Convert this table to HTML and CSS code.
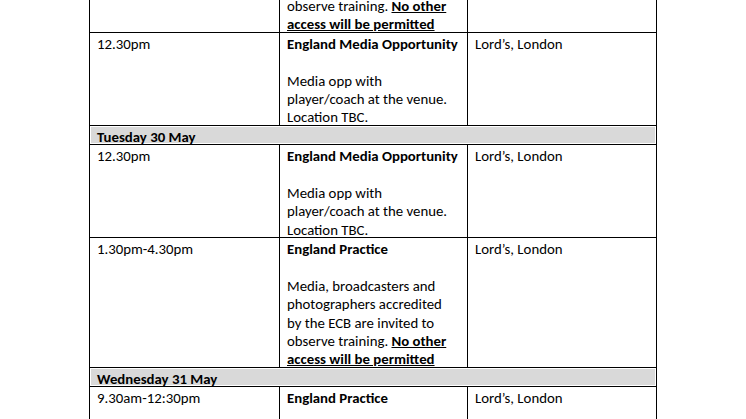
FILE: index.html
```html
<!DOCTYPE html>
<html lang="en">
<head>
<meta charset="utf-8">
<title>Media schedule</title>
<link rel="stylesheet" href="styles.css">
</head>
<body>
<div class="page">
<table class="schedule">
  <colgroup>
    <col class="c-time">
    <col class="c-event">
    <col class="c-venue">
  </colgroup>
  <tr class="partial">
    <td></td>
    <td><div class="ln">observe training. <span class="hl">No other</span></div><div class="ln"><span class="hl">access will be permitted</span></div></td>
    <td></td>
  </tr>
  <tr>
    <td><div class="ln">12.30pm</div></td>
    <td><div class="ln"><b>England Media Opportunity</b></div><div class="ln">&nbsp;</div><div class="ln">Media opp with</div><div class="ln">player/coach at the venue.</div><div class="ln">Location TBC.</div></td>
    <td><div class="ln">Lord’s, London</div></td>
  </tr>
  <tr class="day">
    <td colspan="3"><div class="ln">Tuesday 30 May</div></td>
  </tr>
  <tr>
    <td><div class="ln">12.30pm</div></td>
    <td><div class="ln"><b>England Media Opportunity</b></div><div class="ln">&nbsp;</div><div class="ln">Media opp with</div><div class="ln">player/coach at the venue.</div><div class="ln">Location TBC.</div></td>
    <td><div class="ln">Lord’s, London</div></td>
  </tr>
  <tr>
    <td><div class="ln">1.30pm-4.30pm</div></td>
    <td><div class="ln"><b>England Practice</b></div><div class="ln">&nbsp;</div><div class="ln">Media, broadcasters and</div><div class="ln">photographers accredited</div><div class="ln">by the ECB are invited to</div><div class="ln">observe training. <span class="hl">No other</span></div><div class="ln"><span class="hl">access will be permitted</span></div></td>
    <td><div class="ln">Lord’s, London</div></td>
  </tr>
  <tr class="day">
    <td colspan="3"><div class="ln">Wednesday 31 May</div></td>
  </tr>
  <tr>
    <td><div class="ln">9.30am-12:30pm</div></td>
    <td><div class="ln"><b>England Practice</b></div><div class="ln">&nbsp;</div><div class="ln">&nbsp;</div></td>
    <td><div class="ln">Lord’s, London</div></td>
  </tr>
</table>
</div>
</body>
</html>
```

FILE: styles.css
```css
html, body {
  margin: 0;
  padding: 0;
  background: #ffffff;
}
body {
  width: 746px;
  height: 419px;
  overflow: hidden;
  font-family: "Carlito", "Calibri", "Lato", sans-serif;
  font-size: 14.8px;
  line-height: 18.4px;
  color: #000000;
}
.page {
  margin-top: -5px;
  padding-left: 89px;
}
.schedule {
  border-collapse: collapse;
  table-layout: fixed;
  width: 567px;
}
.c-time { width: 190px; }
.c-event { width: 188px; }
.c-venue { width: 189px; }
.schedule td {
  border: 1px solid #000000;
  padding: 0 4px 0 7px;
  vertical-align: top;
  white-space: nowrap;
}
.schedule tr.partial td {
  border-top: none;
}
.ln {
  height: 16.4px;
  padding-top: 2px;
}
.hl {
  font-weight: bold;
  text-decoration: underline;
}
.schedule tr.day td {
  background: #d9d9d9;
  font-weight: bold;
  box-shadow: inset 0 0 0 1px #ffffff;
}
```
